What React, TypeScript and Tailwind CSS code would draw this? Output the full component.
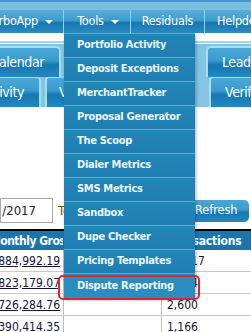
const font = 'font-["DejaVu_Sans_Condensed","Liberation_Sans",sans-serif]';

const menuItems = [
  'Portfolio Activity',
  'Deposit Exceptions',
  'MerchantTracker',
  'Proposal Generator',
  'The Scoop',
  'Dialer Metrics',
  'SMS Metrics',
  'Sandbox',
  'Dupe Checker',
  'Pricing Templates',
  'Dispute Reporting',
];

const rows = [
  { gross: '1,884,992.19', tx: '10,217' },
  { gross: '1,823,179.07', tx: '2,914' },
  { gross: '1,726,284.76', tx: '2,600' },
  { gross: '1,390,414.35', tx: '1,166' },
];

const tabBg = 'bg-[linear-gradient(#4ba7d5,#3b9cd0_42%,#1378b4_58%,#2587bf)]';

function Caret() {
  return <span className="ml-[7px] inline-block border-x-[4px] border-t-[4px] border-x-transparent border-t-white align-middle" />;
}

export default function App() {
  return (
    <div className={`relative w-[251px] h-[332px] overflow-hidden bg-white ${font}`}>
      {/* top strip */}
      <div className="h-[10px] border-t-2 border-[#4597cb] bg-[#7cc0e1]" />

      {/* nav bar */}
      <div className="flex h-[23px] bg-[linear-gradient(#58aed8,#3c9dcf_45%,#1877b1_55%,#2a8cc2)] text-[12.5px] tracking-[-0.2px] text-white">
        <div className="flex w-[64px] justify-end overflow-hidden border-r border-[#8fd2ec]">
          <div className="flex shrink-0 items-center pr-[10px]">
            <span className="whitespace-nowrap">TurboApp</span>
            <Caret />
          </div>
        </div>
        <div className="flex w-[67px] items-center justify-center border-r border-[#8fd2ec] pl-[2px]">
          Tools
          <Caret />
        </div>
        <div className="flex w-[74px] items-center justify-center border-r border-[#8fd2ec]">Residuals</div>
        <div className="flex flex-1 items-center overflow-hidden whitespace-nowrap pl-[12px]">Helpdesk</div>
      </div>

      {/* spacer + lines */}
      <div className="h-[8px] bg-white" />
      <div className="h-[2px] bg-[#a7d3ea]" />
      <div className="h-[1px] bg-white" />

      {/* tab rows */}
      <div className="bg-[#86c4e3] pt-[2px]">
        <div className="flex h-[31px] text-[14px] tracking-[-0.4px] text-white">
          <div className={`flex w-[61px] shrink-0 items-center justify-end overflow-hidden whitespace-nowrap rounded-tr-[5px] border-r-2 border-t-2 border-[#a8dcf2] pr-[15px] ${tabBg}`}>
            Calendar
          </div>
          <div className="flex-1" />
          <div className={`flex w-[45px] shrink-0 items-center overflow-hidden whitespace-nowrap rounded-tl-[5px] border-l-2 border-t-2 border-[#a8dcf2] pl-[14px] ${tabBg}`}>
            Leads
          </div>
        </div>
        <div className="flex h-[30px] text-[14px] tracking-[-0.4px] text-white">
          <div className={`flex w-[41px] shrink-0 items-center justify-end overflow-hidden whitespace-nowrap rounded-tr-[4px] border-r-2 border-t border-[#a8dcf2] pr-[15px] ${tabBg}`}>
            Activity
          </div>
          <div className={`ml-[4px] flex w-[80px] shrink-0 items-center rounded-t-[4px] border-x-2 border-t border-[#a8dcf2] pl-[12px] ${tabBg}`}>
            View
          </div>
          <div className="flex-1" />
          <div className={`flex w-[42px] shrink-0 items-center overflow-hidden whitespace-nowrap rounded-tl-[4px] border-l-2 border-t border-[#a8dcf2] pl-[14px] ${tabBg}`}>
            Verify
          </div>
        </div>
      </div>

      {/* filter row */}
      <div className="mt-[91px] flex h-[25px] items-center">
        <div className="flex h-[25px] w-[53px] items-center justify-end border border-[#a9a9a9] pr-[16px] text-[13px] text-[#222]">
          /2017
        </div>
        <span className="ml-[5px] text-[13px] text-[#7a4a10]">To</span>
        <div className="flex-1" />
        <div className={`mr-[2px] flex h-[22px] w-[60px] items-center rounded-[5px] pl-[6px] text-[12.5px] text-white ${tabBg}`}>
          Refresh
        </div>
      </div>

      {/* table */}
      <div className="mt-[6px] border-t-2 border-black">
        <div className="flex h-[19px] bg-[#1a75ae] text-[12px] font-bold tracking-[-0.2px] text-white">
          <div className="w-[63px] overflow-hidden whitespace-nowrap">
            <div className="-ml-[10px] flex h-[19px] items-center tracking-[-0.5px]">Monthly Gross</div>
          </div>
          <div className="w-[99px]" />
          <div className="flex flex-1 items-center overflow-hidden whitespace-nowrap pl-[5px]">Transactions</div>
        </div>
        {rows.map((r, i) => (
          <div key={i} className="flex h-[22px] border-b border-[#c8c8c8] text-[12px] text-[#14143c]">
            <div className="flex w-[64px] items-center justify-end overflow-hidden whitespace-nowrap border-r border-[#bdbdbd] pr-[3px]">
              <span className="shrink-0 underline">{r.gross}</span>
            </div>
            <div className="w-[98px] border-r border-[#bdbdbd]" />
            <div className="flex flex-1 items-center pl-[5px]">{r.tx}</div>
          </div>
        ))}
      </div>

      {/* dropdown menu */}
      <div className="absolute left-[64px] top-[33px] w-[131px] border-t border-[#2ec6d6] shadow-[1px_2px_3px_rgba(0,40,80,0.35)]">
        {menuItems.map((m, i) => (
          <div
            key={m}
            className={`flex h-[24px] items-center whitespace-nowrap pl-[13px] text-[11px] font-bold tracking-[-0.3px] text-[#eaf6ff] ${
              i < menuItems.length - 1 ? 'border-b border-[#2ec6d6]' : ''
            } ${i === menuItems.length - 1 ? 'bg-[#2a8dc0]' : 'bg-[linear-gradient(#2585b7,#1e7eb1)]'}`}
          >
            {m}
          </div>
        ))}
      </div>

      {/* highlight */}
      <div className="absolute left-[58px] top-[275px] h-[25px] w-[142px] rounded-[5px] border-2 border-[#e8202a]" />
    </div>
  );
}
